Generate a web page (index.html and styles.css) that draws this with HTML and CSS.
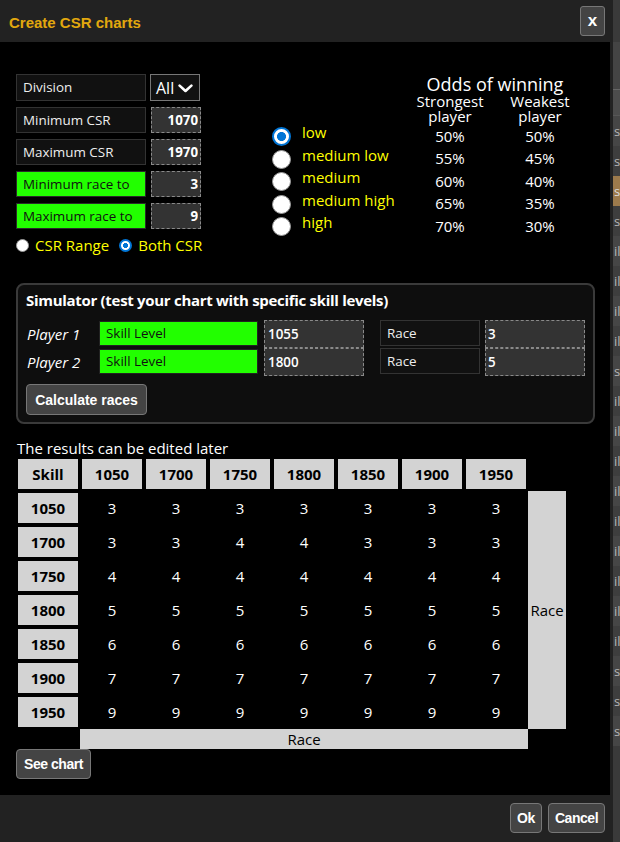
FILE: index.html
```html
<!DOCTYPE html>
<html lang="en">
<head>
<meta charset="utf-8">
<title>Create CSR charts</title>
<link rel="stylesheet" href="styles.css">
</head>
<body>
<div class="page">
  <div class="dialog">
    <header class="titlebar">
      <span class="title">Create CSR charts</span>
      <button class="close">x</button>
    </header>
    <main class="content">
      <section class="top">
        <div class="form">
          <div class="frow first">
            <div class="lbl">Division</div>
            <div class="select"><span>All</span>
              <svg width="15" height="9" viewBox="0 0 15 9"><path d="M1.6 1.6 L7.5 7 L13.4 1.6" fill="none" stroke="#fff" stroke-width="2.6" stroke-linecap="round" stroke-linejoin="round"/></svg>
            </div>
          </div>
          <div class="frow"><div class="lbl">Minimum CSR</div><input class="num" value="1070"></div>
          <div class="frow"><div class="lbl">Maximum CSR</div><input class="num" value="1970"></div>
          <div class="frow"><div class="lbl green">Minimum race to</div><input class="num" value="3"></div>
          <div class="frow"><div class="lbl green">Maximum race to</div><input class="num" value="9"></div>
          <div class="radios">
            <label class="rlab"><input type="radio" name="range" class="rd rd-sm"><span>CSR Range</span></label>
            <label class="rlab second"><input type="radio" name="range" class="rd rd-sm" checked><span>Both CSR</span></label>
          </div>
        </div>
        <div class="odds">
          <div class="odds-title">Odds of winning</div>
          <div class="odds-heads"><div class="oh">Strongest<br>player</div><div class="oh">Weakest<br>player</div></div>
          <div class="orow"><input type="radio" name="odds" class="rd rd-lg" checked><span class="olabel">low</span><span class="pct">50%</span><span class="pct">50%</span></div>
          <div class="orow"><input type="radio" name="odds" class="rd rd-lg"><span class="olabel">medium low</span><span class="pct">55%</span><span class="pct">45%</span></div>
          <div class="orow"><input type="radio" name="odds" class="rd rd-lg"><span class="olabel">medium</span><span class="pct">60%</span><span class="pct">40%</span></div>
          <div class="orow"><input type="radio" name="odds" class="rd rd-lg"><span class="olabel">medium high</span><span class="pct">65%</span><span class="pct">35%</span></div>
          <div class="orow"><input type="radio" name="odds" class="rd rd-lg"><span class="olabel">high</span><span class="pct">70%</span><span class="pct">30%</span></div>
        </div>
      </section>

      <section class="sim">
        <div class="sim-title">Simulator (test your chart with specific skill levels)</div>
        <div class="sim-rows">
          <div class="srow">
            <span class="pl">Player 1</span>
            <div class="skill">Skill Level</div>
            <input class="sinp" value="1055">
            <div class="race">Race</div>
            <input class="sinp rinp" value="3">
          </div>
          <div class="srow">
            <span class="pl">Player 2</span>
            <div class="skill">Skill Level</div>
            <input class="sinp" value="1800">
            <div class="race">Race</div>
            <input class="sinp rinp" value="5">
          </div>
        </div>
        <button class="btn calc">Calculate races</button>
      </section>

      <p class="note">The results can be edited later</p>

      <div class="chart">
        <div class="hc rl">Skill</div>
        <div class="hc">1050</div><div class="hc">1700</div><div class="hc">1750</div><div class="hc">1800</div><div class="hc">1850</div><div class="hc">1900</div><div class="hc">1950</div>

        <div class="hc rl">1050</div><div class="dc">3</div><div class="dc">3</div><div class="dc">3</div><div class="dc">3</div><div class="dc">3</div><div class="dc">3</div><div class="dc">3</div>
        <div class="hc rl">1700</div><div class="dc">3</div><div class="dc">3</div><div class="dc">4</div><div class="dc">4</div><div class="dc">3</div><div class="dc">3</div><div class="dc">3</div>
        <div class="hc rl">1750</div><div class="dc">4</div><div class="dc">4</div><div class="dc">4</div><div class="dc">4</div><div class="dc">4</div><div class="dc">4</div><div class="dc">4</div>
        <div class="hc rl">1800</div><div class="dc">5</div><div class="dc">5</div><div class="dc">5</div><div class="dc">5</div><div class="dc">5</div><div class="dc">5</div><div class="dc">5</div>
        <div class="hc rl">1850</div><div class="dc">6</div><div class="dc">6</div><div class="dc">6</div><div class="dc">6</div><div class="dc">6</div><div class="dc">6</div><div class="dc">6</div>
        <div class="hc rl">1900</div><div class="dc">7</div><div class="dc">7</div><div class="dc">7</div><div class="dc">7</div><div class="dc">7</div><div class="dc">7</div><div class="dc">7</div>
        <div class="hc rl">1950</div><div class="dc">9</div><div class="dc">9</div><div class="dc">9</div><div class="dc">9</div><div class="dc">9</div><div class="dc">9</div><div class="dc">9</div>

        <div class="race-col">Race</div>
        <div class="race-bar">Race</div>
      </div>

      <button class="btn narrow see">See chart</button>
    </main>
    <footer class="footer">
      <button class="btn narrow ok">Ok</button>
      <button class="btn narrow cancel">Cancel</button>
    </footer>
  </div>

  <div class="strip">
    <div class="strip-top"></div>
    <div class="strip-h1"></div>
    <div class="strip-h2"></div>
    <div class="bgrow">s</div>
    <div class="bgrow">s</div>
    <div class="bgrow hl">s</div>
    <div class="bgrow">s</div>
    <div class="bgrow">il</div>
    <div class="bgrow">il</div>
    <div class="bgrow">il</div>
    <div class="bgrow">il</div>
    <div class="bgrow">s</div>
    <div class="bgrow">il</div>
    <div class="bgrow">il</div>
    <div class="bgrow">il</div>
    <div class="bgrow">il</div>
    <div class="bgrow">il</div>
    <div class="bgrow">il</div>
    <div class="bgrow">il</div>
    <div class="bgrow">il</div>
    <div class="bgrow">il</div>
    <div class="bgrow">s</div>
    <div class="bgrow">s</div>
    <div class="bgrow">s</div>
  </div>
</div>
</body>
</html>
```

FILE: styles.css
```css
* { box-sizing: border-box; }
html, body { margin: 0; padding: 0; }
body {
  background: #3a3a3a;
  font-family: "Open Sans", "Noto Sans", sans-serif;
  color: #f2f2f2;
  overflow: hidden;
}
.page { display: flex; width: 620px; height: 842px; }

.dialog {
  width: 613px;
  flex: none;
  display: flex;
  flex-direction: column;
  background: #000;
  border-right: 3px solid #222;
}

/* title bar */
.titlebar {
  height: 42px;
  flex: none;
  background: #222;
  display: flex;
  justify-content: space-between;
  align-items: flex-start;
  padding: 0 5px 0 9px;
}
.title {
  font-family: "Liberation Sans", Arial, sans-serif;
  font-weight: bold;
  font-size: 15px;
  line-height: 20px;
  margin-top: 13px;
  color: #e2a80e;
}
.close {
  margin-top: 6px;
  width: 25px;
  height: 30px;
  padding: 0 0 2px 0;
  background: #444;
  border: 1px solid #777;
  border-radius: 3px;
  color: #fff;
  font: bold 17px/1 "Liberation Sans", Arial, sans-serif;
}

/* content */
.content {
  flex: 1;
  padding: 32px 0 16px 16px;
}

.top { display: flex; align-items: flex-start; }

.form { width: 185px; flex: none; display: flex; flex-direction: column; gap: 6px; }
.frow { display: flex; gap: 5px; height: 26px; }
.frow.first { height: 27px; gap: 4px; }
.lbl {
  width: 130px;
  height: 100%;
  background: #111;
  border: 1px solid #333;
  font-size: 13.4px;
  line-height: 24px;
  padding-left: 6px;
  color: #eee;
  white-space: nowrap;
}
.frow.first .lbl { line-height: 25px; }
.lbl.green { background: #22ff00; color: #111; border-color: #2a2a2a; }
.num {
  width: 50px;
  height: 100%;
  margin: 0;
  background: #333;
  border: 1px dashed #8a8a8a;
  color: #fff;
  font-family: "Open Sans", sans-serif;
  font-weight: bold;
  font-size: 13.3px;
  text-align: right;
  padding: 0 2px 0 0;
}
.select {
  width: 50px;
  height: 27px;
  border: 1px solid #777;
  background: #111;
  display: flex;
  align-items: center;
  gap: 4px;
  padding-left: 5px;
  font-size: 16px;
  color: #fff;
}
.select svg { margin-top: 1px; }

.radios {
  margin-top: 1px;
  display: flex;
  align-items: center;
  height: 18px;
  font-size: 15px;
  line-height: 18px;
  color: #ff0;
}
.rlab { display: flex; align-items: center; gap: 6px; white-space: nowrap; }
.rlab.second { margin-left: 10px; }

.rd {
  -webkit-appearance: none;
  appearance: none;
  margin: 0;
  flex: none;
  border-radius: 50%;
  background: #fff;
  border: 1px solid #9a9a9a;
}
.rd-sm { width: 13px; height: 13px; }
.rd-sm:checked {
  border: 2px solid #0075d6;
  background: radial-gradient(circle closest-side, #0075d6 0 52%, #fff 62%);
}
.rd-lg { width: 19px; height: 19px; margin-top: 3px; }
.rd-lg:checked {
  border: 2.5px solid #0075d6;
  background: radial-gradient(circle closest-side, #0075d6 0 56%, #fff 64%);
}

/* odds */
.odds { margin-left: 71px; margin-top: 1px; display: flex; flex-direction: column; color: #fff; font-size: 15px; }
.odds-title { margin-left: 133px; width: 180px; text-align: center; font-size: 18px; line-height: 19px; }
.odds-heads { margin-left: 133px; display: flex; }
.oh { width: 90px; text-align: center; line-height: 15px; }
.orow { display: grid; grid-template-columns: 30px 103px 90px 90px; height: 22.5px; align-items: start; }
.olabel { color: #ff0; line-height: 15px; margin-top: 1px; white-space: nowrap; }
.pct { text-align: center; line-height: 22.5px; margin-top: 0.5px; }

/* simulator */
.sim {
  margin-top: 29px;
  width: 579px;
  height: 141px;
  border: 2px solid #3a3a3a;
  border-radius: 8px;
  background: #0e0e0e;
  padding: 5px 8px 0 8px;
}
.sim-title { font-weight: bold; font-size: 15px; line-height: 20px; color: #fff; white-space: nowrap; letter-spacing: -0.3px; }
.sim-rows { margin-top: 10px; display: flex; flex-direction: column; }
.srow { display: flex; height: 28px; align-items: flex-start; }
.pl { width: 73px; padding-left: 1px; font-style: italic; font-size: 15px; line-height: 28px; color: #fff; }
.skill {
  width: 159px;
  height: 25px;
  margin-top: 1px;
  background: #22ff00;
  border: 1px solid #222;
  color: #111;
  font-size: 13.4px;
  line-height: 23px;
  padding-left: 6px;
}
.sinp {
  width: 100px;
  height: 28px;
  margin: 0 0 0 6px;
  background: #333;
  border: 1px dashed #8a8a8a;
  color: #fff;
  font-family: "Open Sans", sans-serif;
  font-size: 13.4px;
  font-weight: 600;
  padding: 0 0 0 3px;
}
.race {
  width: 100px;
  height: 26px;
  margin-left: 16px;
  background: #111;
  border: 1px solid #333;
  font-size: 13.4px;
  line-height: 24px;
  padding-left: 6px;
  color: #eee;
}
.rinp { margin-left: 5px; padding-left: 2px; }

.btn {
  background: #444;
  border: 1px solid #777;
  border-radius: 4px;
  color: #fff;
  font-family: "Liberation Sans", Arial, sans-serif;
  font-weight: bold;
  font-size: 14px;
  line-height: 1;
  padding: 0;
}
.narrow { letter-spacing: -0.45px; }
.calc { margin-top: 8px; width: 121px; height: 31px; }

.note { margin: 14px 0 0 1px; font-size: 15px; line-height: 20px; color: #fff; }

/* chart */
.chart {
  margin: 1px 0 0 2px;
  display: grid;
  grid-template-columns: repeat(8, 60px) 38px;
  grid-template-rows: repeat(8, 30px) 20px;
  gap: 4px;
}
.hc {
  background: #d3d3d3;
  color: #000;
  font-weight: bold;
  font-size: 15px;
  display: flex;
  align-items: center;
  justify-content: center;
}
.rl { grid-column: 1; }
.dc {
  color: #fff;
  font-size: 15px;
  display: flex;
  align-items: center;
  justify-content: center;
}
.race-col {
  grid-column: 9;
  grid-row: 2 / 9;
  margin: -2px 2px -2px -2px;
  background: #d3d3d3;
  color: #000;
  font-size: 15px;
  display: flex;
  align-items: center;
  justify-content: center;
}
.race-bar {
  grid-column: 2 / 9;
  grid-row: 9;
  margin: -2px -2px 2px -2px;
  background: #d3d3d3;
  color: #000;
  font-size: 15px;
  line-height: 20px;
  text-align: center;
}
.see { margin-top: -2px; width: 75px; height: 30px; }

/* footer */
.footer {
  height: 47px;
  flex: none;
  background: #222;
  display: flex;
  justify-content: flex-end;
  align-items: flex-start;
  gap: 6px;
  padding: 8px 5px 0 0;
}
.ok { width: 32px; height: 30px; }
.cancel { width: 57px; height: 30px; }

/* background page strip */
.strip {
  flex: 1;
  min-width: 0;
  background: #3a3a3a;
  display: flex;
  flex-direction: column;
  overflow: hidden;
}
.strip-top { height: 42px; flex: none; }
.strip-h1 { height: 48px; flex: none; background: #444; border-bottom: 1px solid #666; }
.strip-h2 { height: 26px; flex: none; background: #4c4c4c; border-bottom: 1px solid #575757; }
.bgrow {
  height: 30px;
  flex: none;
  font-size: 13px;
  line-height: 30px;
  padding-left: 1px;
  color: #b5b5b5;
  white-space: nowrap;
  background: #3e3e3e;
}
.bgrow:nth-child(even) { background: #464646; }
.bgrow.hl { background: #9c7a4c; color: #ddd; }
```
